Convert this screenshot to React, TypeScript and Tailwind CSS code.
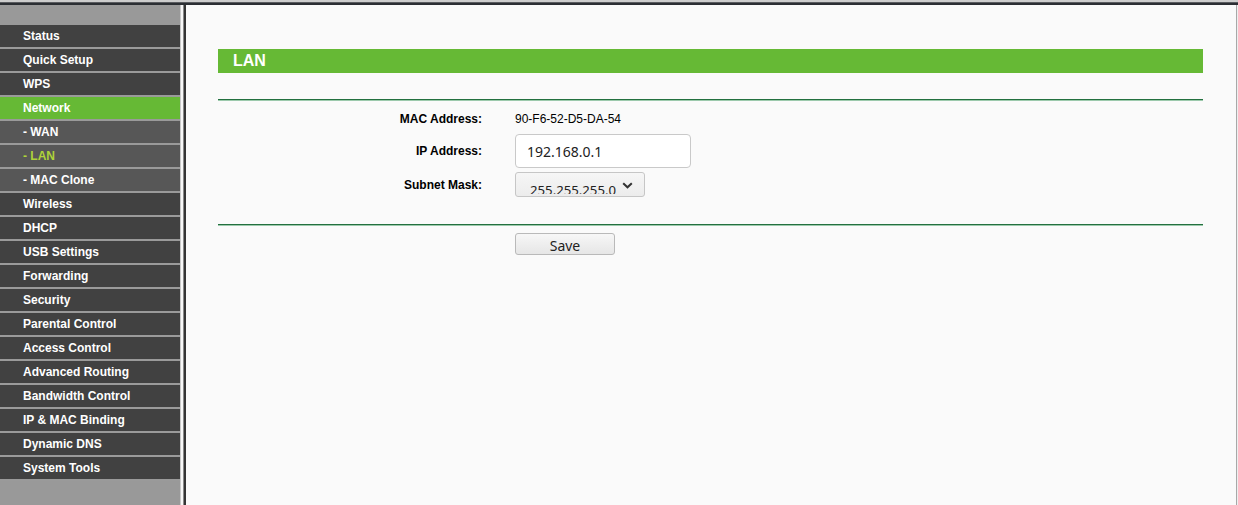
import React from "react";

type Item = { label: string; kind?: "active" | "sub" | "subActive" };

const items: Item[] = [
  { label: "Status" },
  { label: "Quick Setup" },
  { label: "WPS" },
  { label: "Network", kind: "active" },
  { label: "- WAN", kind: "sub" },
  { label: "- LAN", kind: "subActive" },
  { label: "- MAC Clone", kind: "sub" },
  { label: "Wireless" },
  { label: "DHCP" },
  { label: "USB Settings" },
  { label: "Forwarding" },
  { label: "Security" },
  { label: "Parental Control" },
  { label: "Access Control" },
  { label: "Advanced Routing" },
  { label: "Bandwidth Control" },
  { label: "IP & MAC Binding" },
  { label: "Dynamic DNS" },
  { label: "System Tools" },
];

function MenuItem({ item }: { item: Item }) {
  let cls = "bg-[#414141] text-white";
  if (item.kind === "active") cls = "bg-[#66b935] text-white";
  if (item.kind === "sub") cls = "bg-[#575757] text-white";
  if (item.kind === "subActive") cls = "bg-[#575757] text-[#aed339]";
  return (
    <div
      className={`${cls} h-[24px] border-b-2 border-[#9a9a9a] pl-[23px] text-[12px] font-bold leading-[22px] whitespace-nowrap`}
    >
      {item.label}
    </div>
  );
}

function Rule() {
  return (
    <div className="flex flex-col">
      <div className="h-[1px] bg-[#23703f]" />
      <div className="h-[1px] bg-[#9cc9ac]" />
    </div>
  );
}

export default function App() {
  return (
    <div
      className="w-[1238px] h-[505px] overflow-hidden flex flex-col bg-[#fafafa]"
      style={{ fontFamily: '"Liberation Sans", Arial, sans-serif' }}
    >
      <div className="h-[2px] bg-[#cdcdcd]" />
      <div className="h-[1px] bg-[#5a5c60]" />
      <div className="h-[2px] bg-[#2b2e33]" />
      <div className="flex-1 flex">
        {/* sidebar */}
        <div className="w-[180px] bg-[#999999] flex flex-col">
          <div className="h-[20px]" />
          {items.map((it) => (
            <MenuItem key={it.label} item={it} />
          ))}
        </div>
        {/* divider */}
        <div className="w-[1px] bg-[#c8c8c8]" />
        <div className="w-[2px] bg-[#f7f7f7]" />
        <div className="w-[1px] bg-[#8a8a8a]" />
        <div className="w-[2px] bg-[#353535]" />
        {/* content */}
        <div className="flex-1 bg-[#fafafa] pl-[32px] pr-[33px] pt-[44px]">
          <div className="h-[24px] bg-[#66b935] pl-[15px] text-white text-[16px] font-bold leading-[24px]">
            LAN
          </div>
          <div className="h-[26px]" />
          <Rule />
          <div className="pt-[8px] flex flex-col text-[12px] text-black">
            <div className="flex h-[20px] items-center">
              <div className="w-[264px] text-right font-bold">MAC Address:</div>
              <div className="ml-[33px]">90-F6-52-D5-DA-54</div>
            </div>
            <div className="flex h-[34px] items-center mt-[5px]">
              <div className="w-[264px] text-right font-bold">IP Address:</div>
              <div
                className="ml-[33px] w-[176px] h-[34px] bg-white border border-[#c9c9c9] rounded-[4px] pl-[11px] flex items-center text-[14px] text-[#222]"
                style={{ fontFamily: '"Noto Sans", "Open Sans", sans-serif' }}
              >
                192.168.0.1
              </div>
            </div>
            <div className="flex h-[25px] items-center mt-[4px]">
              <div className="w-[264px] text-right font-bold">Subnet Mask:</div>
              <div
                className="ml-[33px] w-[130px] h-[25px] border border-[#c6c6c6] rounded-[3px] bg-gradient-to-b from-[#f6f6f6] to-[#ececec] pl-[14px] flex items-start text-[13.2px] text-[#222]"
                style={{ fontFamily: '"Noto Sans", "Open Sans", sans-serif' }}
              >
                <div className="h-[21px] overflow-hidden">
                  <div className="pt-[8px] leading-[18px] whitespace-nowrap">255.255.255.0</div>
                </div>
                <svg
                  className="ml-[6px] mt-[9px]"
                  width="11"
                  height="7"
                  viewBox="0 0 11 7"
                >
                  <polyline
                    points="1.2,1.2 5.5,5.3 9.8,1.2"
                    fill="none"
                    stroke="#333"
                    strokeWidth="2"
                  />
                </svg>
              </div>
            </div>
          </div>
          <div className="h-[27px]" />
          <Rule />
          <div className="flex mt-[7px]">
            <div className="w-[264px]" />
            <div
              className="ml-[33px] w-[100px] h-[22px] border border-[#b9b9b9] rounded-[3px] bg-gradient-to-b from-[#f7f7f7] to-[#e6e6e6] flex justify-center items-start text-[14px] text-[#222]"
              style={{ fontFamily: '"Noto Sans", "Open Sans", sans-serif' }}
            >
              <span className="pt-[2px] leading-[19px]">Save</span>
            </div>
          </div>
        </div>
        <div className="w-[1px] bg-[#a8a8a8]" />
        <div className="w-[1px] bg-[#efefef]" />
      </div>
    </div>
  );
}
